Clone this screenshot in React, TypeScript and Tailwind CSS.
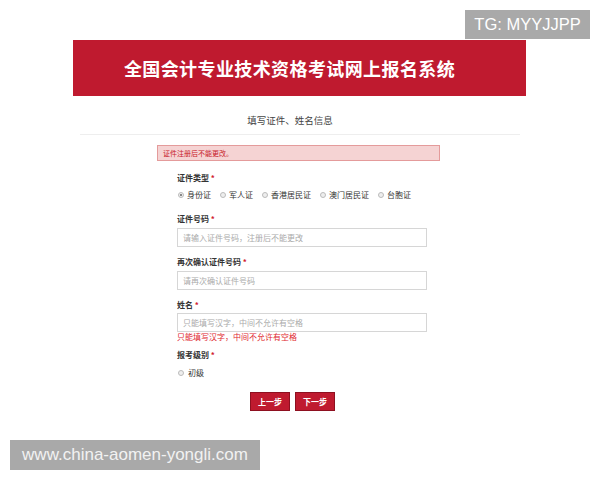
import { useState } from 'react';

const cjk = { fontFamily: '"Noto Sans CJK SC", "Noto Sans", sans-serif' };
const latin = { fontFamily: '"Liberation Sans", Arial, sans-serif' };

const tipos = ['身份证', '军人证', '香港居民证', '澳门居民证', '台胞证'];

function Radio({ checked }: { checked?: boolean }) {
  return (
    <span className="w-[6px] h-[6px] rounded-full border border-[#bbb] bg-[#eee] flex items-center justify-center shrink-0">
      {checked && <span className="w-[2px] h-[2px] rounded-full bg-[#666]" />}
    </span>
  );
}

function Label({ text }: { text: string }) {
  return (
    <div className="text-[8px] leading-[12px] font-bold text-[#333]">
      {text} <span className="text-[#d0202e]">*</span>
    </div>
  );
}

function Input({ placeholder }: { placeholder: string }) {
  return (
    <div className="w-[250px] h-[19px] border border-[#d6d6d6] bg-white flex items-center px-[5px] text-[8px] text-[#aaa]">
      {placeholder}
    </div>
  );
}

export default function App() {
  const [tipo] = useState(0);

  return (
    <div className="relative w-[600px] h-[480px] bg-white overflow-hidden" style={cjk}>
      <div className="pt-[40px] pl-[73px]">
        <div className="w-[453px] h-[56px] bg-[#bf1a2f] flex items-center justify-center pr-[20px]">
          <span className="text-white text-[18px] font-bold tracking-[0.4px]">全国会计专业技术资格考试网上报名系统</span>
        </div>
      </div>

      <div className="mt-[17px] text-center pr-[20px] text-[9.5px] leading-[14px] text-[#444]">填写证件、姓名信息</div>
      <div className="mt-[7px] ml-[80px] w-[440px] h-px bg-[#eee]" />

      <div className="mt-[10px] ml-[157px] w-[283px] h-[16px] bg-[#f5d3d3] border border-[#e49b9b] flex items-center px-[5px] text-[7px] text-[#c8202a]">
        证件注册后不能更改。
      </div>

      <div className="ml-[177px] flex flex-col">
        <div className="mt-[11px]"><Label text="证件类型" /></div>
        <div className="mt-[5px] ml-[1px] flex items-center gap-[9px] text-[8px] leading-[12px] text-[#333]">
          {tipos.map((t, i) => (
            <div key={t} className="flex items-center gap-[3px]">
              <Radio checked={i === tipo} />
              <span>{t}</span>
            </div>
          ))}
        </div>

        <div className="mt-[12px]"><Label text="证件号码" /></div>
        <div className="mt-[3px]"><Input placeholder="请输入证件号码，注册后不能更改" /></div>

        <div className="mt-[9px]"><Label text="再次确认证件号码" /></div>
        <div className="mt-[3px]"><Input placeholder="请再次确认证件号码" /></div>

        <div className="mt-[9px]"><Label text="姓名" /></div>
        <div className="mt-[2px]"><Input placeholder="只能填写汉字，中间不允许有空格" /></div>
        <div className="text-[8px] leading-[10px] text-[#e0262e]">只能填写汉字，中间不允许有空格</div>

        <div className="mt-[7px]"><Label text="报考级别" /></div>
        <div className="mt-[6px] ml-[1px] flex items-center gap-[4px] text-[8px] leading-[12px] text-[#333]">
          <Radio />
          <span>初级</span>
        </div>
      </div>

      <div className="mt-[13px] ml-[250px] flex gap-[5px]">
        <button className="w-[40px] h-[19px] bg-[#bf1a2f] border border-[#8e1020] text-white text-[8px] font-bold">上一步</button>
        <button className="w-[40px] h-[19px] bg-[#bf1a2f] border border-[#8e1020] text-white text-[8px] font-bold">下一步</button>
      </div>

      <div className="absolute left-[465px] top-[10px] w-[125px] h-[29px] bg-[#a9a9a9] flex items-center justify-center text-white text-[16.5px]" style={latin}>
        TG: MYYJJPP
      </div>
      <div className="absolute left-[10px] top-[440px] w-[250px] h-[30px] bg-[#a9a9a9] flex items-center justify-center text-[#f2f2f2] text-[17px]" style={latin}>
        www.china-aomen-yongli.com
      </div>
    </div>
  );
}
